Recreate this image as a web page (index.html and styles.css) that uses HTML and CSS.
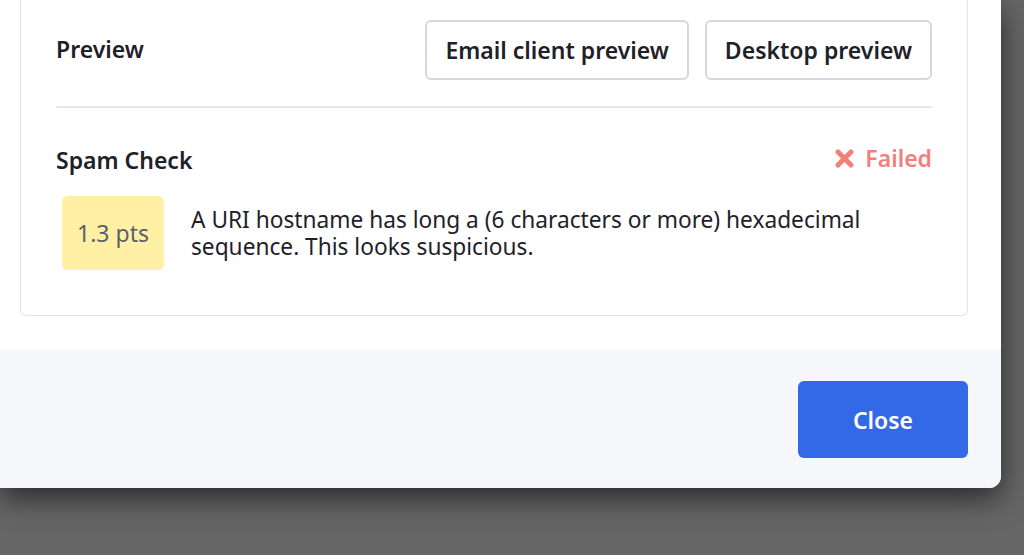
FILE: index.html
```html
<!DOCTYPE html>
<html lang="en">
<head>
    <meta charset="UTF-8">
    <meta name="viewport" content="width=device-width, initial-scale=1.0">
    <title>Email check</title>
    <link rel="stylesheet" href="styles.css">
</head>
<body>
    <div class="modal">
        <div class="modal-body">
            <div class="card">
                <div class="section-head preview-row">
                    <h3>Preview</h3>
                    <div class="button-group">
                        <button class="btn-outline">Email client preview</button>
                        <button class="btn-outline">Desktop preview</button>
                    </div>
                </div>
                <div class="spam">
                    <div class="section-head">
                        <h3>Spam Check</h3>
                        <span class="status-failed">
                            <svg width="21" height="19" viewBox="0 0 21 19">
                                <path d="M4 3 L17 16 M17 3 L4 16" stroke="#f47f7a" stroke-width="5" stroke-linecap="round"/>
                            </svg>
                            Failed
                        </span>
                    </div>
                    <div class="rule">
                        <div class="points">1.3 pts</div>
                        <p>A URI hostname has long a (6 characters or more) hexadecimal sequence. This looks suspicious.</p>
                    </div>
                </div>
            </div>
        </div>
        <div class="modal-footer">
            <button class="btn-primary">Close</button>
        </div>
    </div>
</body>
</html>
```

FILE: styles.css
```css
body {
    margin: 0;
    height: 555px;
    overflow: hidden;
    background-color: #666666;
    font-family: 'Noto Sans', sans-serif;
    color: #1f2129;
}

.modal {
    width: 1001px;
    background-color: #ffffff;
    border-radius: 0 0 12px 0;
    box-shadow: 0 10px 30px rgba(0, 0, 0, 0.6);
    overflow: hidden;
}

.modal-body {
    padding: 0 33px 34px 20px;
}

.card {
    border: 1px solid #e2e4ec;
    border-top: none;
    border-radius: 0 0 6px 6px;
    padding: 20px 35px 45px 35px;
}

.section-head {
    display: flex;
    justify-content: space-between;
    align-items: center;
}

h3 {
    margin: 0;
    font-size: 23px;
    font-weight: 600;
    line-height: 28px;
}

.preview-row {
    padding-bottom: 26px;
    border-bottom: 2px solid #e7e8ee;
}

.preview-row h3 {
    margin-top: -2px;
}

.button-group {
    display: flex;
    gap: 16px;
}

button {
    font-family: inherit;
    font-size: 23px;
    font-weight: 600;
    cursor: pointer;
}

.btn-outline {
    height: 60px;
    padding: 0 18px;
    background-color: #ffffff;
    border: 2px solid #d5d8e1;
    border-radius: 6px;
    color: #1f2129;
}

.spam {
    padding-top: 38px;
}

.status-failed {
    display: flex;
    align-items: center;
    gap: 10px;
    color: #f47f7a;
    font-size: 23px;
    font-weight: 600;
    margin-top: -4px;
}

.rule {
    display: flex;
    align-items: center;
    gap: 27px;
    margin-top: 22px;
    padding-left: 6px;
}

.points {
    width: 102px;
    height: 74px;
    flex-shrink: 0;
    display: flex;
    align-items: center;
    justify-content: center;
    background-color: #fff0a6;
    border-radius: 6px;
    font-size: 23px;
    color: #5c5f6b;
}

.rule p {
    margin: 0;
    font-size: 22.7px;
    line-height: 27px;
}

.modal-footer {
    display: flex;
    justify-content: flex-end;
    background-color: #f6f7fb;
    padding: 31px 33px 30px 0;
}

.btn-primary {
    width: 170px;
    height: 77px;
    border: none;
    border-radius: 6px;
    background-color: #3369e7;
    color: #ffffff;
}
```
